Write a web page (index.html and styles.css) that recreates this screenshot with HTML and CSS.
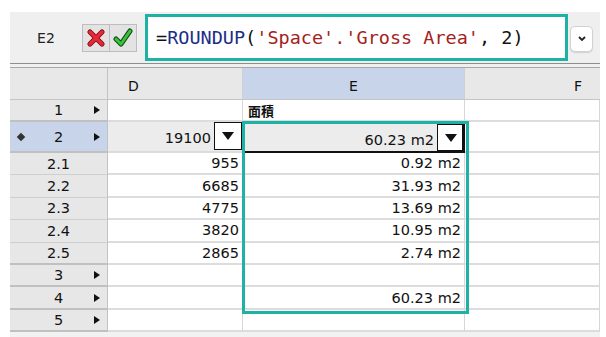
FILE: index.html
```html
<!DOCTYPE html>
<html>
<head>
	<title>Sheet</title>
	<link rel="stylesheet" href="styles.css">
</head>
<body>
<div class="app">
	<div class="toolbar">
		<div class="cell-ref">E2</div>
		<div class="btns">
			<span class="btn">
				<svg width="20" height="20" viewBox="0 0 20 20">
					<path d="M4 4 L16 16 M16 4 L4 16" stroke="#7a0d12" stroke-width="5.2" stroke-linecap="round"/>
					<path d="M4 4 L16 16 M16 4 L4 16" stroke="#e8283a" stroke-width="3.4" stroke-linecap="round"/>
				</svg>
			</span>
			<span class="btn">
				<svg width="20" height="20" viewBox="0 0 20 20">
					<path d="M3 11 L8 16 L17 3" fill="none" stroke="#0d4d12" stroke-width="5" stroke-linecap="round" stroke-linejoin="round"/>
					<path d="M3 11 L8 16 L17 3" fill="none" stroke="#3cc23a" stroke-width="3" stroke-linecap="round" stroke-linejoin="round"/>
				</svg>
			</span>
		</div>
		<div class="formula"><span>=</span><span class="fn">ROUNDUP</span><span>(</span><span class="str">'Space'.'Gross Area'</span><span>, 2)</span></div>
		<div class="menu-btn">
			<svg width="10" height="8" viewBox="0 0 10 8"><polyline points="2,2 5,5 8,2" fill="none" stroke="#222" stroke-width="1.8"/></svg>
		</div>
	</div>
	<div class="divider"></div>

	<div class="sheet">
		<div class="col-head corner"></div>
		<div class="col-head left">D</div>
		<div class="col-head center sel">E</div>
		<div class="col-head right">F</div>

		<div class="row-head major"><span></span><span>1</span><span class="arrow"></span></div>
		<div class="cell"></div>
		<div class="cell label">面積</div>
		<div class="cell"></div>

		<div class="row-head major sel"><span class="dot"></span><span>2</span><span class="arrow"></span></div>
		<div class="cell pick"><span class="val">19100</span><span class="drop"></span></div>
		<div class="cell pick active"><span class="val">60.23 m2</span><span class="drop"></span></div>
		<div class="cell"></div>

		<div class="row-head"><span></span><span>2.1</span><span></span></div>
		<div class="cell num">955</div>
		<div class="cell num">0.92 m2</div>
		<div class="cell"></div>

		<div class="row-head"><span></span><span>2.2</span><span></span></div>
		<div class="cell num">6685</div>
		<div class="cell num">31.93 m2</div>
		<div class="cell"></div>

		<div class="row-head"><span></span><span>2.3</span><span></span></div>
		<div class="cell num">4775</div>
		<div class="cell num">13.69 m2</div>
		<div class="cell"></div>

		<div class="row-head"><span></span><span>2.4</span><span></span></div>
		<div class="cell num">3820</div>
		<div class="cell num">10.95 m2</div>
		<div class="cell"></div>

		<div class="row-head major"><span></span><span>2.5</span><span></span></div>
		<div class="cell num">2865</div>
		<div class="cell num">2.74 m2</div>
		<div class="cell"></div>

		<div class="row-head major"><span></span><span>3</span><span class="arrow"></span></div>
		<div class="cell"></div>
		<div class="cell"></div>
		<div class="cell"></div>

		<div class="row-head major"><span></span><span>4</span><span class="arrow"></span></div>
		<div class="cell"></div>
		<div class="cell num">60.23 m2</div>
		<div class="cell"></div>

		<div class="row-head major"><span></span><span>5</span><span class="arrow"></span></div>
		<div class="cell"></div>
		<div class="cell"></div>
		<div class="cell"></div>

		<div class="focus"></div>
	</div>
	<div class="sheet-foot"></div>
</div>
</body>
</html>
```

FILE: styles.css
```css
html, body {margin: 0; padding: 0; background: #fff;}
body {font-family: "DejaVu Sans", sans-serif; font-size: 14.5px; color: #111;}

.app {margin: 12px 6px 0 10px;}

/* formula bar */
.toolbar {display: flex; align-items: center; height: 51px; padding-right: 7px; background: #efefef; border-bottom: 1px solid #8e8e8e;}
.cell-ref {width: 72px; text-align: center; font-size: 14px; color: #222;}
.btns {display: flex; gap: 0;}
.btn {display: flex; align-items: center; justify-content: center; width: 26px; height: 26px; background: #e3e3e3; border: 1px solid #bdbdbd; margin-right: -1px;}
.formula {flex: 1; display: flex; align-items: center; height: 47px; box-sizing: border-box; margin-left: 9px; padding-left: 8px; background: #fff; border: 3px solid #1eb2a6; font-family: "DejaVu Sans Mono", monospace; font-size: 18.5px; color: #111; white-space: pre;}
.formula .fn {color: #1c2e86;}
.formula .str {color: #a3231c;}
.menu-btn {display: flex; align-items: center; justify-content: center; width: 23px; height: 26px; margin: 3px 0 0 2px; box-sizing: border-box; background: #fff; border: 1px solid #d2d2d2; border-radius: 5px; box-shadow: 0 1px 1px rgba(0,0,0,0.12);}

.divider {height: 3px; background: #f0f0f0; border-bottom: 1px solid #a8a8a8;}

/* sheet grid */
.sheet {position: relative; display: grid; grid-template-columns: 98px 135px 222px 1fr; grid-template-rows: 32px 22px 31px repeat(8, 22.4px);}
.sheet > div {box-sizing: border-box;}

.col-head {display: flex; align-items: center; padding-top: 5px; background: #e8e8e8; border-right: 1px solid #d0d0d0; border-bottom: 1px solid #c4c4c4; font-size: 14px;}
.col-head.left {padding-left: 20px;}
.col-head.center {justify-content: center;}
.col-head.right {justify-content: flex-end; padding-right: 18px; border-right: 0;}
.col-head.sel {background: #c7d4ea;}
.col-head.corner {border-right: 1px solid #c2c2c2;}

.row-head {display: grid; grid-template-columns: 20px 1fr 20px; align-items: center; background: #e7e7e7; border-right: 1px solid #c2c2c2; border-bottom: 1px solid #cfcfcf; font-size: 14.5px;}
.row-head span {display: flex; justify-content: center; align-items: center;}
.row-head.major {border-bottom: 2px solid #c0c0c0;}
.row-head.sel {background: #c7d4ea;}
.row-head .arrow {width: 0; height: 0; justify-self: center; border-left: 6px solid #111; border-top: 4.5px solid transparent; border-bottom: 4.5px solid transparent;}
.row-head .dot {width: 6px; height: 6px; justify-self: center; margin-left: 2px; background: #333; transform: rotate(45deg);}

.cell {display: flex; align-items: center; border-right: 1px solid #d6d6d6; border-bottom: 2px solid #dcdcdc; background: #fff;}
.cell.num {justify-content: flex-end; padding-right: 3px;}
.cell.label {padding-left: 5px; font-family: "Noto Sans CJK JP", sans-serif; font-weight: bold; font-size: 13px;}

.cell.pick {justify-content: flex-end; align-items: flex-start; background: #ececec;}
.cell.pick .val {align-self: flex-end; padding: 0 3px 5px 0;}
.cell.pick .drop {position: relative; width: 28px; height: 28px; box-sizing: border-box; background: #fff; border: 1.5px solid #111;}
.cell.pick .drop::after {content: ""; position: absolute; left: 7px; top: 9px; border-top: 8px solid #111; border-left: 6px solid transparent; border-right: 6px solid transparent;}
.cell.active {border: 2px solid #111; padding-right: 0;}
.cell.active .val {padding-bottom: 3px;}
.cell.active .drop {width: 26px; height: 27px; margin-right: 0;}

.focus {position: absolute; left: 232px; top: 53px; width: 227px; height: 193px; border: 3px solid #1eb2a6; pointer-events: none;}

.sheet-foot {height: 5px; background: #f2f2f2;}
```
